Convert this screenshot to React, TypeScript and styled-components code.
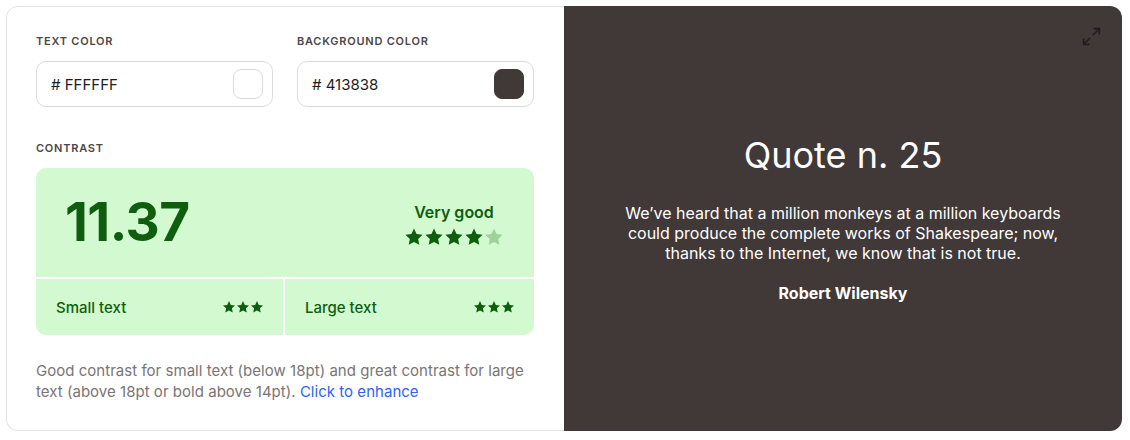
import React from "react";
import styled, { createGlobalStyle } from "styled-components";

const Global = createGlobalStyle`
  html, body { margin: 0; padding: 0; background: #ffffff; }
  body { font-family: Inter, "Noto Sans", "Liberation Sans", sans-serif; }
  * { box-sizing: border-box; }
`;

const Card = styled.div`
  margin: 6px;
  width: 1116px;
  height: 425px;
  display: grid;
  grid-template-columns: 558px 1fr;
`;

const LeftPanel = styled.div`
  border: 1px solid #e4e4e4;
  border-right: none;
  border-radius: 12px 0 0 12px;
  padding: 27px 30px 0 29px;
  display: flex;
  flex-direction: column;
`;

const FieldRow = styled.div`
  display: grid;
  grid-template-columns: 1fr 1fr;
  gap: 24px;
`;

const Field = styled.div`
  display: flex;
  flex-direction: column;
`;

const Label = styled.div`
  font-size: 11px;
  line-height: 14px;
  font-weight: 600;
  letter-spacing: 0.07em;
  color: #4e4646;
  text-transform: uppercase;
  margin-bottom: 13px;
`;

const InputBox = styled.div`
  height: 46px;
  border: 1px solid #dcdcdc;
  border-radius: 10px;
  display: flex;
  align-items: center;
  justify-content: space-between;
  padding: 0 9px 0 14px;
  font-size: 15px;
  color: #1d1d1d;
`;

const Swatch = styled.div<{ $color: string }>`
  width: 30px;
  height: 30px;
  border-radius: 8px;
  background: ${(p) => p.$color};
  border: 1px solid ${(p) => (p.$color === "#FFFFFF" ? "#dcdcdc" : p.$color)};
`;

const ContrastSection = styled.div`
  margin-top: 34px;
  display: flex;
  flex-direction: column;
`;

const ScoreCard = styled.div`
  border-radius: 10px;
  overflow: hidden;
  display: grid;
  grid-template-rows: 109px 56px;
  row-gap: 2px;
  background: #ffffff;
`;

const ScoreTop = styled.div`
  background: #d3f9d1;
  display: flex;
  align-items: center;
  justify-content: space-between;
  padding: 0 30px 0 29px;
`;

const Score = styled.div`
  font-size: 53px;
  font-weight: 700;
  color: #0e5e0e;
  letter-spacing: -0.01em;
  line-height: 1;
`;

const Rating = styled.div`
  display: flex;
  flex-direction: column;
  align-items: center;
  gap: 5px;
  margin-top: 3px;
`;

const RatingText = styled.div`
  font-size: 16px;
  font-weight: 600;
  color: #0e5e0e;
`;

const Stars = styled.div<{ $gap: number }>`
  display: flex;
  gap: ${(p) => p.$gap}px;
`;

const ScoreBottom = styled.div`
  display: grid;
  grid-template-columns: 247px 1fr;
  column-gap: 2px;
`;

const Cell = styled.div`
  background: #d3f9d1;
  display: flex;
  align-items: center;
  justify-content: space-between;
  padding: 0 19px 0 20px;
  font-size: 15px;
  font-weight: 500;
  color: #0e5e0e;
`;

const Description = styled.p`
  margin: 25px 0 0 0;
  font-size: 15px;
  line-height: 21px;
  letter-spacing: 0.03px;
  color: #7a7474;
`;

const Link = styled.a`
  color: #2c64f0;
  text-decoration: none;
  cursor: pointer;
`;

const RightPanel = styled.div`
  background: #413838;
  border-radius: 0 12px 12px 0;
  position: relative;
  display: flex;
  flex-direction: column;
  align-items: center;
  justify-content: center;
  color: #ffffff;
  text-align: center;
  padding: 0 40px;
`;

const ExpandButton = styled.div`
  position: absolute;
  top: 20px;
  right: 20px;
  color: #231c1c;
  display: flex;
`;

const QuoteTitle = styled.div`
  font-size: 36px;
  font-weight: 400;
  line-height: 42px;
  margin-bottom: 27px;
`;

const QuoteText = styled.div`
  font-size: 16px;
  line-height: 20px;
  max-width: 460px;
`;

const Author = styled.div`
  margin-top: 20px;
  font-size: 16px;
  font-weight: 700;
`;

const Star: React.FC<{ size: number; color: string }> = ({ size, color }) => (
  <svg width={size} height={size} viewBox="0 0 24 24">
    <path
      d="M12 1.8l3.1 6.6 7.2.9-5.3 5 1.4 7.1L12 17.9l-6.4 3.5 1.4-7.1-5.3-5 7.2-.9z"
      fill={color}
    />
  </svg>
);

const Maximize: React.FC = () => (
  <svg width="21" height="21" viewBox="0 0 24 24" fill="none" stroke="currentColor" strokeWidth="1.8" strokeLinecap="round" strokeLinejoin="round">
    <polyline points="15 3 21 3 21 9" />
    <polyline points="9 21 3 21 3 15" />
    <line x1="21" y1="3" x2="14" y2="10" />
    <line x1="3" y1="21" x2="10" y2="14" />
  </svg>
);

export default function App() {
  return (
    <>
      <Global />
      <Card>
        <LeftPanel>
          <FieldRow>
            <Field>
              <Label>Text color</Label>
              <InputBox>
                <span># FFFFFF</span>
                <Swatch $color="#FFFFFF" />
              </InputBox>
            </Field>
            <Field>
              <Label>Background color</Label>
              <InputBox>
                <span># 413838</span>
                <Swatch $color="#413838" />
              </InputBox>
            </Field>
          </FieldRow>
          <ContrastSection>
            <Label>Contrast</Label>
            <ScoreCard>
              <ScoreTop>
                <Score>11.37</Score>
                <Rating>
                  <RatingText>Very good</RatingText>
                  <Stars $gap={0}>
                    {[0, 1, 2, 3].map((i) => (
                      <Star key={i} size={20} color="#0e5e0e" />
                    ))}
                    <Star size={20} color="#9dd29a" />
                  </Stars>
                </Rating>
              </ScoreTop>
              <ScoreBottom>
                <Cell>
                  <span>Small text</span>
                  <Stars $gap={0}>
                    {[0, 1, 2].map((i) => (
                      <Star key={i} size={14} color="#0e5e0e" />
                    ))}
                  </Stars>
                </Cell>
                <Cell>
                  <span>Large text</span>
                  <Stars $gap={0}>
                    {[0, 1, 2].map((i) => (
                      <Star key={i} size={14} color="#0e5e0e" />
                    ))}
                  </Stars>
                </Cell>
              </ScoreBottom>
            </ScoreCard>
          </ContrastSection>
          <Description>
            Good contrast for small text (below 18pt) and great contrast for large text (above 18pt or bold above 14pt).{" "}
            <Link>Click to enhance</Link>
          </Description>
        </LeftPanel>
        <RightPanel>
          <ExpandButton>
            <Maximize />
          </ExpandButton>
          <QuoteTitle>Quote n. 25</QuoteTitle>
          <QuoteText>
            We’ve heard that a million monkeys at a million keyboards could produce the complete works of Shakespeare; now, thanks to the Internet, we know that is not true.
          </QuoteText>
          <Author>Robert Wilensky</Author>
        </RightPanel>
      </Card>
    </>
  );
}
